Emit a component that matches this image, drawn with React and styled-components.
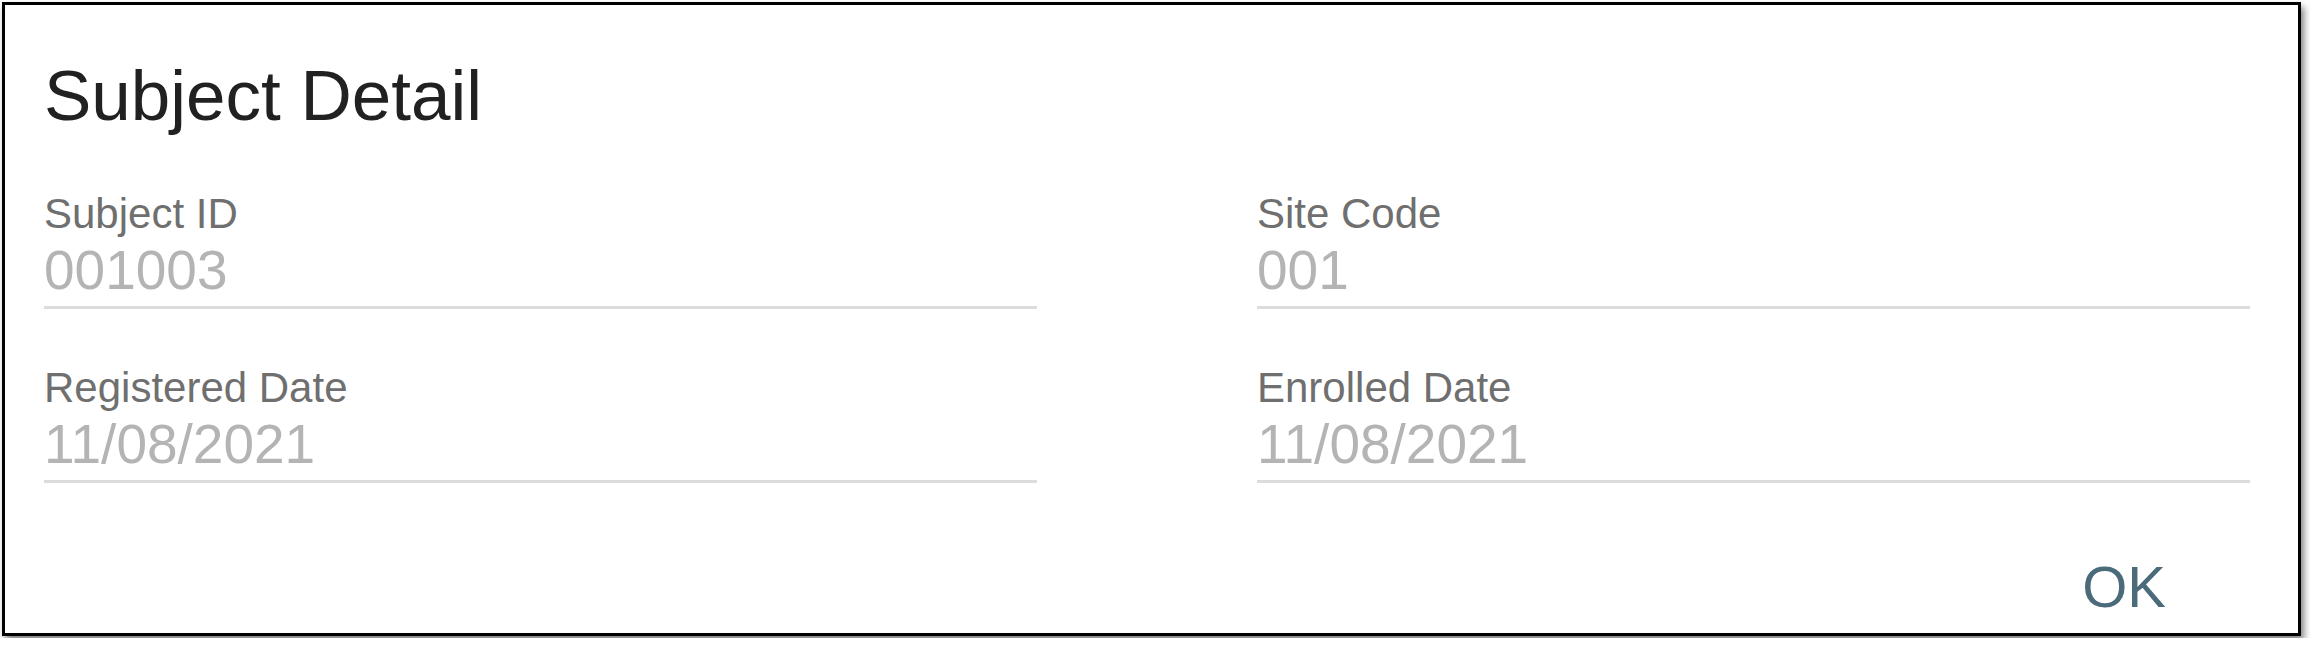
import React from 'react';
import styled, { createGlobalStyle } from 'styled-components';

const GlobalStyle = createGlobalStyle`
  body {
    margin: 0;
    background: #ffffff;
    font-family: "Liberation Sans", Arial, sans-serif;
  }
`;

const fields = [
  { label: 'Subject ID', value: '001003' },
  { label: 'Site Code', value: '001' },
  { label: 'Registered Date', value: '11/08/2021' },
  { label: 'Enrolled Date', value: '11/08/2021' },
];

const SubjectDetail = () => {
  return (
    <Page>
      <GlobalStyle />
      <Frame>
        <Title>Subject Detail</Title>
        <FieldGrid>
          {fields.map(field => (
            <Field key={field.label}>
              <FieldLabel>{field.label}</FieldLabel>
              <FieldValue>{field.value}</FieldValue>
            </Field>
          ))}
        </FieldGrid>
        <Actions>
          <OkButton type="button">OK</OkButton>
        </Actions>
      </Frame>
    </Page>
  );
};

const Page = styled.div`
  padding: 2px;
`;

const Frame = styled.div`
  box-sizing: border-box;
  width: 2299px;
  height: 634px;
  border: 3px solid #000;
  background: #fff;
  box-shadow: 3px 5px 7px rgba(0, 0, 0, 0.5);
  padding: 51px 48px 0 39px;
  display: flex;
  flex-direction: column;
`;

const Title = styled.h2`
  margin: 0;
  font-size: 71px;
  line-height: 80px;
  font-weight: 400;
  color: #212121;
`;

const FieldGrid = styled.div`
  display: grid;
  grid-template-columns: 1fr 1fr;
  column-gap: 220px;
  row-gap: 55px;
  margin-top: 54px;
`;

const Field = styled.div`
  display: flex;
  flex-direction: column;
  gap: 1px;
  padding-bottom: 5px;
  border-bottom: 3px solid #dcdcdc;
`;

const FieldLabel = styled.label`
  font-size: 42px;
  line-height: 48px;
  color: #6f6f6f;
`;

const FieldValue = styled.div`
  font-size: 55px;
  line-height: 62px;
  color: #b4b4b4;
`;

const Actions = styled.div`
  display: flex;
  justify-content: flex-end;
  margin-top: 71px;
  padding-right: 84px;
`;

const OkButton = styled.button`
  border: none;
  background: none;
  padding: 0;
  font-family: "Liberation Sans", Arial, sans-serif;
  font-size: 58px;
  line-height: 66px;
  color: #4b6b7b;
  cursor: pointer;
`;

export default SubjectDetail;
